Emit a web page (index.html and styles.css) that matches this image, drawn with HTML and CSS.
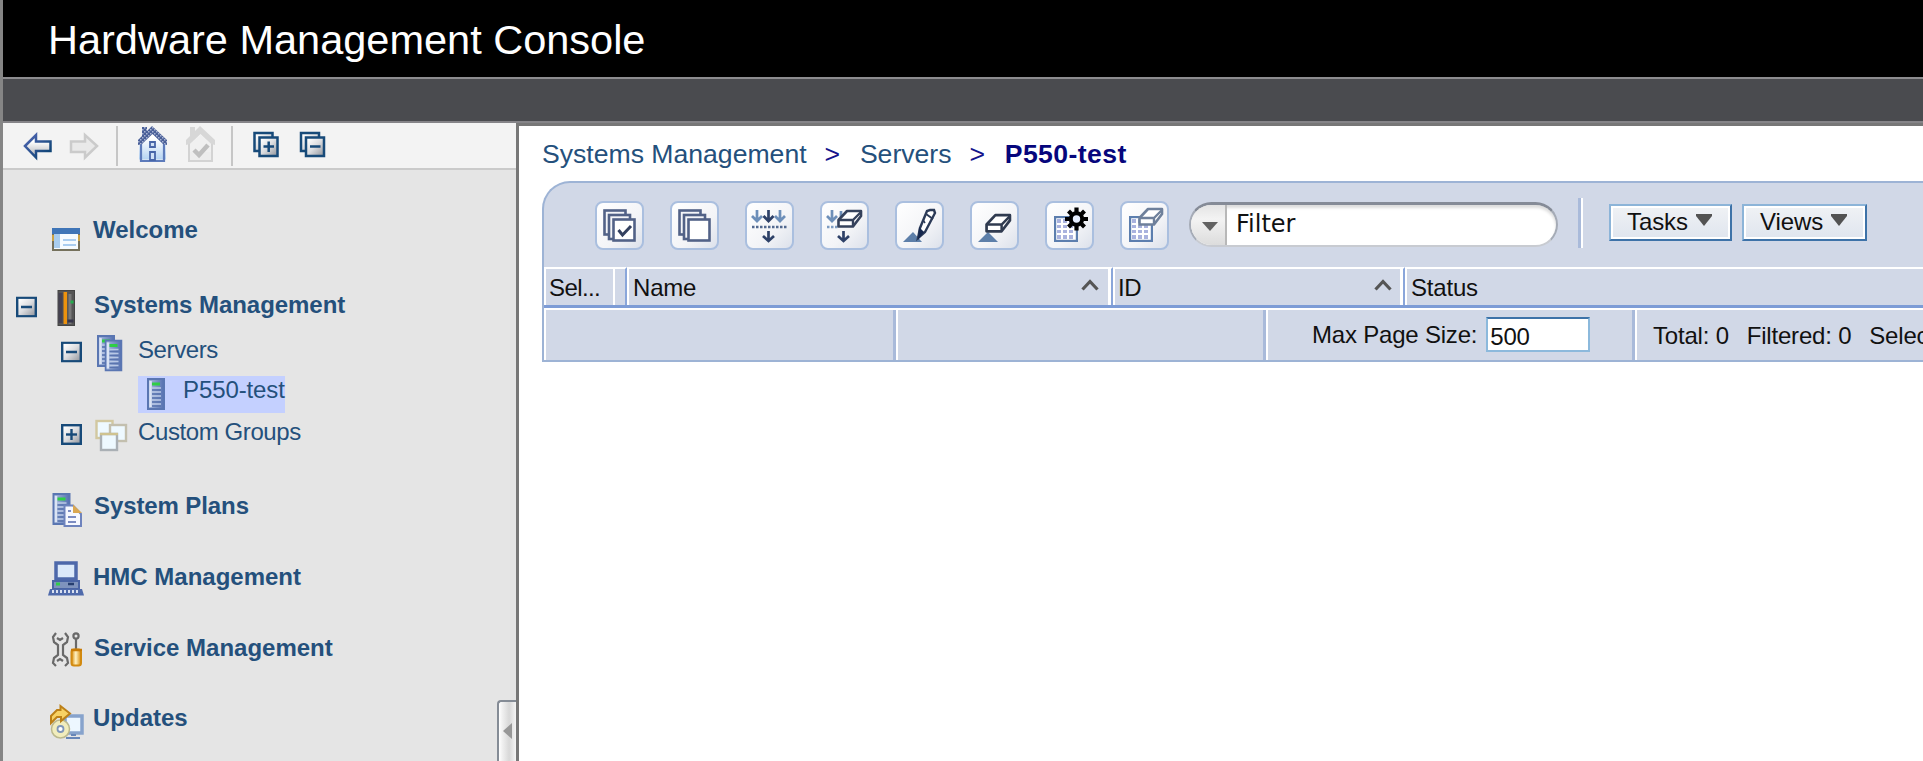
FILE: index.html
```html
<!DOCTYPE html>
<html lang="en">
<head>
<meta charset="utf-8">
<title>Hardware Management Console</title>
<link rel="stylesheet" href="styles.css">
</head>
<body>
<svg class="defs" width="0" height="0">
  <defs>
    <linearGradient id="steel" x1="0" y1="0" x2="1" y2="1"><stop offset=".1" stop-color="#fff"/><stop offset=".5" stop-color="#dcdde0"/><stop offset="1" stop-color="#8f9299"/></linearGradient>
    <linearGradient id="arrow" x1="0" y1="0" x2="0" y2="1"><stop offset=".3" stop-color="#fff"/><stop offset="1" stop-color="#a9abb0"/></linearGradient>
    <linearGradient id="edge" x1="0" y1="0" x2="1" y2="1"><stop offset="0" stop-color="#5267b5"/><stop offset="1" stop-color="#053f6c"/></linearGradient>
    <linearGradient id="house" x1="0" y1="0" x2="0" y2="1"><stop offset=".3" stop-color="#fff"/><stop offset="1" stop-color="#b5d4f3"/></linearGradient>
    <linearGradient id="blue" x1="0" y1="0" x2="1" y2="0"><stop offset="0" stop-color="#a9bcdf"/><stop offset="1" stop-color="#5570b0"/></linearGradient>
    <linearGradient id="gold" x1="0" y1="0" x2="1" y2="0"><stop offset="0" stop-color="#d98a06"/><stop offset=".45" stop-color="#fff3c4"/><stop offset="1" stop-color="#d98a06"/></linearGradient>
    <pattern id="tile" width="4" height="4" patternUnits="userSpaceOnUse"><rect width="4" height="4" fill="#4a5f98"/><rect width="1.5" height="1.5" fill="#a9b5d3"/><rect x="2" y="2" width="1.5" height="1.5" fill="#a9b5d3"/></pattern>
    <symbol id="minus" viewBox="0 0 21 21"><rect x="1.2" y="1.2" width="18.6" height="18.6" fill="url(#steel)" stroke="#174a79" stroke-width="2.4"/><path d="M5 10.5h11" stroke="#174a79" stroke-width="2.4"/></symbol>
    <symbol id="plus" viewBox="0 0 21 21"><use href="#minus"/><path d="M10.5 5v11" stroke="#174a79" stroke-width="2.4"/></symbol>
    <symbol id="server" viewBox="0 0 18 32"><rect x="1" y="1" width="16" height="30" fill="url(#blue)" stroke="#5a76b2" stroke-width="2"/><path d="M3.500 3v26" stroke="#dbe4f4" stroke-width="2.500"/><path d="M5 6h8" stroke="#2fce45" stroke-width="3"/><path d="M5 12h9M5 16h9M5 20h9M5 24h9M5 28h9" stroke="#5a74ae" stroke-width="1.500"/><path d="M5 10h9M5 14h9M5 18h9M5 22h9M5 26h9" stroke="#b9c8e5" stroke-width="1.600"/></symbol>
    <symbol id="eraser" viewBox="0 0 26 20"><path d="M1.500 11L10 2h14v5l-8 10.500H1.500z" fill="#fff" stroke="currentColor" stroke-width="2.600" stroke-linejoin="round"/><path d="M1.500 11H16V17M16 11L24 3" fill="none" stroke="currentColor" stroke-width="2.400"/></symbol>
    <symbol id="grid" viewBox="0 0 24 26"><rect x="1" y="1" width="22" height="24" fill="#fff" stroke="#5c7eae" stroke-width="2.400"/><path d="M3 3h4v4H3zM9 3h4v4H9zM15 3h4v4h-4zM3 9h4v3H3zM9 9h4v3H9zM15 9h4v3h-4zM3 14h4v3H3zM9 14h4v3H9zM15 14h4v3h-4zM3 19h4v4H3zM9 19h4v4H9zM15 19h4v4h-4z" fill="#a9b2de"/></symbol>
  </defs>
</svg>
<div class="window">
  <header class="banner"><h1 class="title">Hardware Management Console</h1></header>
  <div class="strip"></div>
  <div class="body">
    <aside class="sidebar">
      <div class="nav-tools">
        <svg width="300" height="44" viewBox="0 0 300 44">
          <path d="M25 23L36 12V18.500H50.500V28H36V34.500Z" fill="url(#arrow)" stroke="url(#edge)" stroke-width="2.500"/>
          <path d="M97 23L85 12V18.500H71V29H85V34.500Z" fill="#e9e9e9" stroke="#cbcbcb" stroke-width="2.500"/>
          <path d="M117 3V43M232 3V43" stroke="#c6c6c6" stroke-width="2"/>
          <path d="M139 20L152.500 7L166 20V37.500H139Z" fill="url(#house)" transform="translate(0 -1)"/>
          <path d="M141 20V38H164V20" fill="none" stroke="#5d7bbb" stroke-width="2.200"/>
          <path d="M138 22V17L142 13V4H147V8L152 3L167 17V22L163 21L152.500 11L142 21Z" fill="url(#tile)"/>
          <path d="M150 19h5v5h-5zM150 29h5v8h-5z" fill="#cfe1f7" stroke="#4766a9" stroke-width="1.800"/>
          <path d="M189 20V38H212V20" fill="#ededed" stroke="#d3d3d3" stroke-width="2"/>
          <path d="M186 22V17L190 13V4H195V8L200 3L215 17V22L211 21L200.500 11L190 21Z" fill="#d7d7d7"/><path d="M201 12L211 21V29H190V21Z" fill="#f0f0f0"/>
          <path d="M194 27L199 32L208 22" fill="none" stroke="#bfbfbf" stroke-width="4.500"/>
          <g fill="url(#steel)" stroke="#174a79" stroke-width="2.500"><rect x="254.500" y="10" width="18" height="18"/><rect x="259.500" y="14.500" width="18" height="18.500"/><path d="M263.500 23.500h10.500M268.700 18.500v10.500"/><rect x="301" y="10" width="18" height="18"/><rect x="306" y="14.500" width="18" height="18.500"/><path d="M310 23.500h10.500"/></g>
        </svg>
      </div>
      <nav class="tree">
        <div class="row top"><svg class="slot" width="91" height="36"><rect x="53" y="18" width="26" height="21" fill="#f5fbff" stroke="#75715c" stroke-width="2"/><path d="M52 20h28" stroke="#3f75b7" stroke-width="6"/><path d="M57 23v14" stroke="#a9cdee" stroke-width="6"/><path d="M63 29h13M63 34h13" stroke="#a9cdf0" stroke-width="2"/><path d="M53 24v6M79 24v6" stroke="#cda446" stroke-width="2"/></svg><b>Welcome</b></div>
        <div class="row systems"><svg class="slot" width="92" height="36"><use href="#minus" x="16" y="10.500" width="21" height="21"/><rect x="58" y="4.500" width="16.500" height="35" fill="#555" stroke="#444"/><path d="M60.500 7v30" stroke="#444150" stroke-width="4"/><path d="M65.300 6v32" stroke="#ed920d" stroke-width="3.500"/><path d="M70 8v30" stroke="#797979" stroke-width="3"/><path d="M70.500 16h3" stroke="#22ae4c" stroke-width="3"/><path d="M67.500 35h6" stroke="#37354b" stroke-width="3"/></svg><b>Systems Management</b></div>
        <div class="row servers"><svg class="slot" width="136" height="36"><use href="#minus" x="61" y="10.500" width="21" height="21"/><use href="#server" x="97" y="4" width="18" height="32"/><use href="#server" x="104.500" y="8.500" width="18" height="32"/></svg><span>Servers</span></div>
        <div class="row leaf"><svg class="slot" width="43" height="36"><use href="#server" x="9" y="2" width="18" height="32"/></svg><span>P550-test</span></div>
        <div class="row groups"><svg class="slot" width="136" height="36"><use href="#plus" x="61" y="11" width="21" height="21"/><g fill="#eef9ff" stroke-width="2.400"><rect x="96.500" y="8" width="16" height="17" stroke="#d2c8a0"/><rect x="110" y="12" width="16" height="16" stroke="#c3bfae"/><rect x="101" y="21" width="16" height="16" stroke="#aab0b5"/><path d="M100 21h18" stroke="#cfc390"/></g></svg><span>Custom Groups</span></div>
        <div class="row plans"><svg class="slot" width="92" height="36"><use href="#server" x="52" y="6" width="19" height="32"/><path d="M64.500 18.500H73L81 27V39H64.500Z" fill="#f6f8ff" stroke="#6e83bd" stroke-width="2"/><path d="M73 17.500V26H82Z" fill="#d9a752"/><path d="M68 24h3M68 30h8M68 35h8" stroke="#7c8cc2" stroke-width="2"/></svg><b>System Plans</b></div>
        <div class="row hmc"><svg class="slot" width="91" height="36"><rect x="56" y="5" width="20" height="16" fill="#dbe9fa" stroke="#4d68aa" stroke-width="3.500"/><rect x="53" y="23" width="26" height="8" fill="#7f93bd" stroke="#4a64a5" stroke-width="2"/><path d="M56 26h4" stroke="#32cb4b" stroke-width="3"/><path d="M68 26h6" stroke="#263e70" stroke-width="2.500"/><path d="M50 31h32l2 6.500H48z" fill="#4f6aab"/><path d="M53 32v3M57 32v3M61 32v3M65 32v3M69 32v3M73 32v3M77 32v3" stroke="#e7edf8" stroke-width="1.800"/></svg><b>HMC Management</b></div>
        <div class="row service"><svg class="slot" width="92" height="36"><g fill="none" stroke="#696969" stroke-width="2.200"><path d="M56 4L53 8L54 13L58 16V26L54 29L53 34L56 37M65 4L68 8L67 13L63 16V26L67 29L68 34L65 37M57 9L60 11L63 9M57 32L60 30L63 32"/><circle cx="76" cy="7" r="2.600"/><path d="M76 10V20"/></g><rect x="71.500" y="20.500" width="9.500" height="16" rx="2.500" fill="url(#gold)" stroke="#d28a10" stroke-width="2"/><path d="M71 21h11" stroke="#c97b05" stroke-width="2.500"/></svg><b>Service Management</b></div>
        <div class="row updates"><svg class="slot" width="91" height="36"><rect x="65" y="17" width="17" height="17" fill="#edf7ff" stroke="#87a3cc" stroke-width="3.500"/><path d="M66 39h14M71 36h5" stroke="#6887b8" stroke-width="2"/><circle cx="60.500" cy="30" r="9" fill="#f1edbd" stroke="#bbb98e" stroke-width="1.500"/><circle cx="60.500" cy="30" r="3" fill="#fff" stroke="#7f96ba" stroke-width="1.800"/><path d="M51 24V17L57 11H60.500V7L70 14.500L61 22V18H57Z" fill="#f8d264" stroke="#bd8118" stroke-width="2"/></svg><b>Updates</b></div>
      </nav>
      <div class="handle"><svg width="9" height="16" viewBox="0 0 9 16"><path d="M0 8L9 0V16Z" fill="#979797"/></svg></div>
    </aside>
    <main class="content">
      <nav class="crumbs"><span>Systems Management</span><i>&gt;</i><span>Servers</span><i>&gt;</i><b>P550-test</b></nav>
      <section class="panel">
        <div class="toolbar">
          <div class="tools">
            <div class="tool"><svg viewBox="0 0 49 49"><g fill="#f4f5f8" stroke="#526287" stroke-width="2.600"><rect x="9.500" y="9.500" width="21" height="24"/><rect x="14" y="14" width="21" height="24"/><rect x="18.500" y="18.500" width="21" height="21" fill="#fff"/></g><path d="M23.500 29L27.500 34L36 25" fill="none" stroke="#33405f" stroke-width="3"/></svg></div>
            <div class="tool"><svg viewBox="0 0 49 49"><g fill="#f4f5f8" stroke="#526287" stroke-width="2.600"><rect x="9.500" y="9.500" width="21" height="24"/><rect x="14" y="14" width="21" height="24"/><rect x="18.500" y="18.500" width="21" height="21" fill="#fff"/></g></svg></div>
            <div class="tool"><svg viewBox="0 0 49 49"><g fill="none" stroke-width="2.700"><path d="M12 9V20M7 15L12 20L17 15M35 9V20M30 15L35 20L40 15" stroke="#6d8fb9"/><path d="M23.500 9V20M18.500 15L23.500 20L28.500 15M23.500 30V40M18 35L23.500 40L29 35" stroke="#2e4168"/><path d="M7 26H42" stroke="#52698f" stroke-dasharray="2.500 1.500"/></g></svg></div>
            <div class="tool"><svg viewBox="0 0 49 49"><g fill="none" stroke-width="2.700"><path d="M12 9V20M7 15L12 20L17 15M21 10V16" stroke="#6d8fb9"/><path d="M23.500 30V40M18 35L23.500 40L29 35" stroke="#2e4168"/><path d="M7 26H18" stroke="#7d9cc2" stroke-dasharray="2.500 1.500"/></g><use href="#eraser" x="17" y="8" width="26" height="20" color="#35425c"/></svg></div>
            <div class="tool"><svg viewBox="0 0 49 49"><path d="M8 41L18 31L27 41Z" fill="#5d7fa9"/><path d="M25 27L32 10L35 9H39L40 12L30 31L23 37Z" fill="#fff" stroke="#2b3a57" stroke-width="2.400"/><path d="M31 13L38 18" stroke="#2b3a57" stroke-width="2"/><path d="M28 19L30 22" stroke="#2b3a57" stroke-width="1.600"/><path d="M24 26L29 31L23 39Z" fill="#17294f"/></svg></div>
            <div class="tool"><svg viewBox="0 0 49 49"><path d="M8 41L18 31L28 41Z" fill="#5d7fa9"/><use href="#eraser" x="15" y="12" width="27" height="21" color="#303b50"/></svg></div>
            <div class="tool"><svg viewBox="0 0 49 49"><use href="#grid" x="9" y="15" width="24" height="26"/><circle cx="31.500" cy="18" r="5.700" fill="#e7efff" stroke="#000" stroke-width="4"/><g stroke="#000" stroke-width="4.200"><path d="M31.500 6.500V11M31.500 25V29.500M20 18H24.500M38.500 18H43M23.500 10L26.500 13M36.500 23L39.500 26M39.500 10L36.500 13M26.500 23L23.500 26"/></g></svg></div>
            <div class="tool"><svg viewBox="0 0 49 49"><use href="#grid" x="9" y="15" width="24" height="26"/><use href="#eraser" x="18" y="6" width="26" height="20" color="#6e809b"/></svg></div>
          </div>
          <div class="filter"><div class="filter-menu"><svg width="16" height="9"><path d="M0 0H16L8 9Z" fill="#626262"/></svg></div><div class="filter-text">Filter</div></div>
          <div class="divider"></div>
          <div class="menu">Tasks<svg width="16" height="12"><path d="M0 0H16V2L8 12L0 2Z" fill="#535353"/></svg></div>
          <div class="menu views">Views<svg width="16" height="12"><path d="M0 0H16V2L8 12L0 2Z" fill="#535353"/></svg></div>
        </div>
        <div class="heads">
          <div class="head sel"><span>Sel...</span></div>
          <div class="head name"><span>Name</span><svg width="18" height="12"><path d="M1.500 10.500L9 2.500L16.500 10.500" fill="none" stroke="#555" stroke-width="3.200"/></svg></div>
          <div class="head id"><span>ID</span><svg width="18" height="12"><path d="M1.500 10.500L9 2.500L16.500 10.500" fill="none" stroke="#555" stroke-width="3.200"/></svg></div>
          <div class="head status"><span>Status</span></div>
        </div>
        <div class="foot">
          <div class="cell c1"></div><div class="cell c2"></div>
          <div class="cell c3"><span>Max Page Size:</span><div class="size">500</div></div>
          <div class="cell c4"><span>Total: 0</span><span>Filtered: 0</span><span>Selected: 0</span></div>
        </div>
      </section>
    </main>
  </div>
</div>
</body>
</html>
```
FILE: styles.css
```css
* { box-sizing: border-box; }
body { margin: 0; overflow: hidden; font-family: "Liberation Sans", Arial, sans-serif; font-size: 24px; color: #111; }
svg { flex: none; overflow: visible; display: block; }
.defs { position: absolute; }
.window { width: 1923px; height: 761px; display: flex; flex-direction: column; border-left: 3px solid #858585; overflow: hidden; }
.banner { height: 77px; background: #000; padding: 16px 0 0 45px; }
.title { margin: 0; font-size: 41.500px; font-weight: 400; line-height: 48px; color: #fff; white-space: nowrap; }
.strip { height: 46px; background: #4a4b4f; border-top: 2px solid #8d8c8f; border-bottom: 2px solid #858488; }
.body { flex: 1; display: flex; min-height: 0; }
.sidebar { position: relative; width: 513px; background: #e5e5e5; color: #24507c; }
.nav-tools { height: 47px; background: #f3f3f3; border-bottom: 2px solid #cacaca; }
.nav-tools svg { margin-left: -3px; }
.tree { padding-top: 41px; margin-left: -1px; }
.row { display: flex; height: 36px; line-height: 37px; white-space: nowrap; margin-left: -2px; }
.row span { letter-spacing: -.4px; }
.slot { margin-right: 2px; }
.systems { margin-top: 39px; }
.systems b { letter-spacing: -.05px; }
.servers { margin-top: 9px; }
.leaf { margin-top: 9px; margin-left: 136px; width: 147px; height: 37px; line-height: 28px; background: #c4d0ff; }
.row.leaf span { letter-spacing: -.1px; }
.groups { margin-top: 0; line-height: 38px; }
.plans { margin-top: 38px; }
.plans b { letter-spacing: -.1px; }
.hmc, .service { margin-top: 35px; }
.updates { margin-top: 34px; line-height: 38px; }
.handle { position: absolute; right: 0; bottom: 0; width: 19px; height: 61px; border: 2px solid #858c96; border-right: 0; border-bottom: 0; border-radius: 4px 0 0 0; background: linear-gradient(90deg, #fff, #f0f0f0 20%, #d8d8d8 60%, #f5f5f5); padding: 21px 0 0 4px; }
.content { flex: 1; min-width: 0; background: #fff; border-left: 3px solid #777; border-top: 3px solid #777; padding-left: 23px; }
.crumbs { height: 55px; padding-top: 12px; display: flex; line-height: 33px; font-size: 26.600px; color: #24507c; white-space: nowrap; }
.crumbs i { font-style: normal; color: #14148c; width: 53.300px; padding-left: 18px; }
.crumbs b { color: #06067c; letter-spacing: .4px; }
.panel { width: 1400px; height: 181px; background: #d1d8e7; border: 2px solid #9db3d5; border-right: 0; border-radius: 28px 0 0 0; }
.toolbar { height: 84px; display: flex; padding: 18px 0 0 51px; }
.tools { display: flex; gap: 26px; }
.tool { width: 49px; height: 49px; border: 2px solid #aabfdf; border-radius: 8px; background: linear-gradient(135deg, #fff, #f3f4f7 60%, #dce1eb); }
.tool svg { width: 49px; height: 49px; margin: -2px; }
.filter { width: 369px; height: 45px; margin-left: 20px; margin-top: 1px; display: flex; border: 2px solid #a5abb6; border-top: 3px solid #858b97; border-bottom-color: #c8cbd1; border-radius: 23px; background: #fff; overflow: hidden; box-shadow: inset 0 3px 3px #ddd; }
.filter-menu { width: 36px; border-right: 2px solid #b8b8b8; background: linear-gradient(#e4e4e4, #f3f3f3 35%, #dcdcdc); padding: 17px 0 0 11px; }
.filter-text { font-family: "DejaVu Sans", sans-serif; font-size: 24px; line-height: 39px; padding-left: 9px; }
.divider { width: 5px; height: 50px; margin: -3px 0 0 20px; border-left: 3px solid #a9bada; border-right: 2px solid #fff; }
.menu { display: flex; width: 123px; height: 37px; margin: 3px 0 0 26px; padding-left: 16px; line-height: 32px; border: 2px solid; border-color: #8cb4d8 #3d72a8 #3d72a8 #8cb4d8; box-shadow: inset 0 0 0 2px #fff; background: linear-gradient(#f0f2f5, #dfe5ee); letter-spacing: -.1px; }
.menu svg { margin: 8px 0 0 8px; }
.menu.views { width: 125px; margin-left: 10px; }
.heads { height: 41px; display: flex; border-bottom: 3px solid #7d9cd6; }
.head { display: flex; justify-content: space-between; line-height: 37px; border-top: 2px solid #fff; border-left: 2px solid #fff; border-right: 2px solid #8aa6da; padding-left: 4px; }
.head svg { margin: 10px 9px 0 0; }
.head::after { content: ""; flex: none; width: 3px; background: #fff; }
.sel { width: 83px; letter-spacing: -.6px; padding-left: 3px; }
.sel::after { width: 10px; background: #d1d8e7; border-left: 2px solid #fff; }
.name { width: 486px; letter-spacing: -.2px; }
.name svg, .id svg { margin-left: auto; }
.id { width: 292px; padding-left: 3px; letter-spacing: -.3px; }
.id svg { margin-right: 8px; }
.status { flex: 1; letter-spacing: -.2px; }
.status::after { content: none; }
.foot { height: 52px; display: flex; border-top: 2px solid #fff; border-left: 2px solid #fff; }
.cell { display: flex; flex: none; border-right: 3px solid #a9bada; line-height: 51px; white-space: nowrap; }
.cell + .cell { border-left: 2px solid #fff; }
.c1 { width: 350px; }
.c2 { width: 370px; }
.c3 { width: 369px; padding-left: 44px; letter-spacing: -.2px; }
.c3 > span { margin-top: -1px; }
.c4 { flex: 1; padding-left: 16px; gap: 18px; letter-spacing: -.2px; }
.size { width: 104px; height: 35px; margin: 7px 0 0 9px; padding-left: 2px; line-height: 35px; background: #fff; border: 2px solid #8cb9dc; border-top-color: #3d72a8; }
```
